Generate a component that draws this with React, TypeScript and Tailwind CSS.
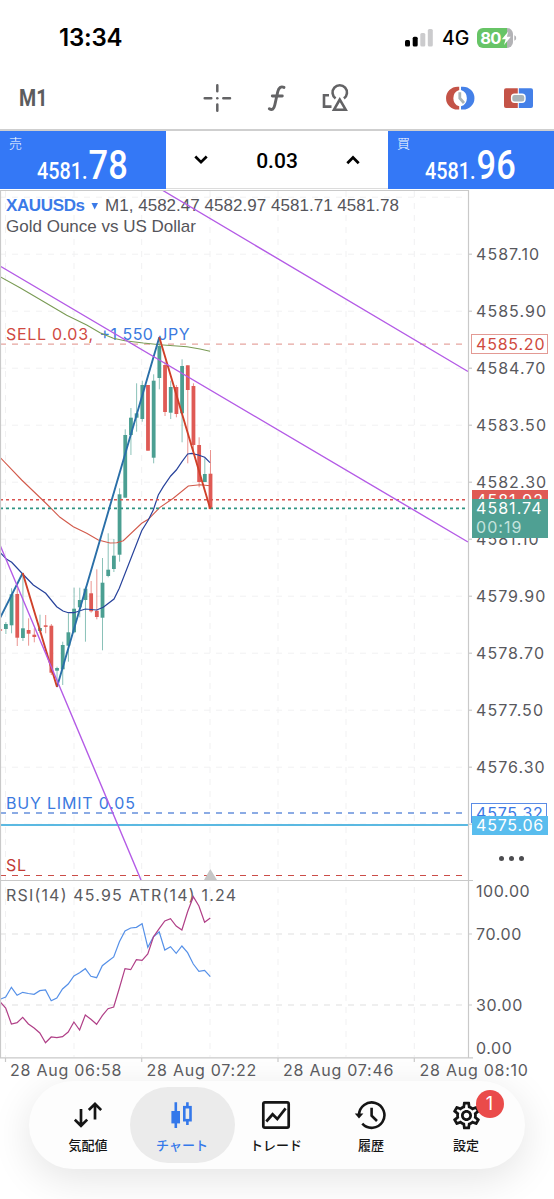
import type { ReactNode } from 'react';
import clsx from 'clsx';
import { MdOutlineSettings } from 'react-icons/md';

const STEP = 5.684;
const UP = '#4b9f92';
const DOWN = '#df5a55';

type Candle = { up: boolean; body: [number, number]; wick: [number, number] };

const up = (a: number, b: number, c: number, d: number): Candle => ({ up: true, body: [a, b], wick: [c, d] });
const down = (a: number, b: number, c: number, d: number): Candle => ({ up: false, body: [a, b], wick: [c, d] });

// one entry per bar: body top, body bottom, wick top, wick bottom
const candles: Candle[] = [
  down(629.3, 630.7, 629, 631),
  up(624, 629, 622, 634),
  up(594.3, 625.3, 588.3, 633.3),
  down(594, 637.7, 588.3, 646),
  up(628.3, 638, 573.3, 641),
  down(630, 633.7, 618.3, 645.7),
  down(634.7, 637, 628.3, 642.3),
  up(628, 631, 614.7, 633.3),
  down(625.3, 626.9, 615, 633.3),
  down(625.7, 672.7, 624, 675),
  up(668, 670.7, 666.7, 686.7),
  up(645, 669.3, 641.7, 685),
  up(632.3, 645.7, 613.3, 661.7),
  up(608.7, 632.3, 587.7, 633.3),
  up(600, 607.3, 587.7, 617.3),
  up(588.7, 600, 586.7, 641.7),
  down(593.3, 611.3, 581, 612.7),
  down(610.7, 617, 569.3, 619.3),
  up(582.7, 617.7, 558, 650.3),
  up(569.7, 576, 533.3, 577.3),
  up(555.7, 569, 539, 572),
  up(494.3, 554.7, 488.3, 561.7),
  up(435, 497.7, 429.3, 497.7),
  up(417.7, 435, 408, 455),
  up(413.3, 417.7, 383.3, 431.7),
  up(385, 419, 380.7, 421.7),
  down(385, 450.7, 385, 450.7),
  up(380.7, 457.7, 374.3, 463.3),
  up(346, 378, 340, 389.3),
  down(365, 412, 361.7, 416),
  up(387, 412.7, 380.7, 419),
  down(387, 414, 385, 417.3),
  up(366, 413.3, 359.3, 442.3),
  down(365.3, 390, 365.3, 463.3),
  down(386, 445, 383.3, 453.3),
  down(445, 482, 437.3, 487.3),
  up(474, 482, 458.3, 482),
  down(473.7, 509, 450, 509),
];

const rsi = [
  999.3, 997, 987.3, 995.3, 992.3, 993.5, 994.3, 990.7, 990, 1000.7, 998, 989, 984, 976, 972.7, 968.7, 976.3, 977.7,
  965.7, 961.3, 957, 941.7, 931, 928, 927.3, 923.7, 947.3, 936.7, 931.7, 950, 946.7, 953.3, 946, 952.7, 964, 971.3,
  970.3, 976.7,
];

const atr = [
  1001.7, 1008, 1024, 1022.7, 1017.3, 1024, 1028, 1033, 1042.7, 1037, 1037.7, 1036.7, 1032, 1022, 1030, 1015, 1019.3,
  1024.3, 1015.7, 1008.7, 1007, 988, 968.7, 969.7, 959.7, 960.3, 954, 936.7, 928.7, 921, 918.7, 926, 930, 911.7, 896.7,
  906, 922.3, 918,
];

const slowMa =
  '0,276.7 20,287.7 43,301.3 66.7,315.3 86.7,325 100,332.7 113.3,338.3 125,340.7 143.3,343 160,344.7 187,346.7 200,349 210,351.3';
const midMa =
  '0,457.3 21.7,480 46.7,504 60,517.3 73.3,526.7 86.7,533.3 98.3,540 110,543 116.7,542.7 123.3,540.7 141.7,523.3 148.3,519.3 160,507.3 173.3,498.3 188.3,486 200,484.7 210.3,485.7';
const fastMa =
  '0,552.3 6.7,559.3 11.7,562.3 22.7,574 33.3,585 45.7,593.3 56.7,606.7 63,611 68.3,612.7 74,612.7 85.3,609 96.7,610 103.3,607.3 114,599 119.3,588.3 141.7,530.7 148.3,520 153.3,510 158.3,495 163.3,486.7 170.7,476 176.3,470 182,461.7 187.7,454 191.7,453.3 198.3,455 204.7,457.3 210,462.7';

const priceLabels = [
  '4587.10', '4585.90', '4584.70', '4583.50', '4582.30', '4581.10', '4579.90', '4578.70', '4577.50', '4576.30',
];
const timeLabels = ['28 Aug 06:58', '28 Aug 07:22', '28 Aug 07:46', '28 Aug 08:10'];

const gridX = [5.5, 74, 141.7, 210, 278, 346, 414.3];
const gridY = [197, 254, 311, 368, 425, 482, 539, 596, 653, 710, 767, 824];

const toPoints = (values: number[]) => values.map((y, i) => `${(i * STEP).toFixed(1)},${y}`).join(' ');

function StatusBar() {
  return (
    <div className="flex h-[75px] items-center justify-between pl-[59px] pr-[37px]">
      <span className="text-[24px] font-semibold leading-none tracking-[-0.2px] text-black">13:34</span>
      <div className="flex items-center">
        <svg width="28" height="18" viewBox="0 0 28 18">
          <rect x="0" y="11" width="5" height="6.5" rx="1.5" fill="#000" />
          <rect x="7.7" y="7.8" width="5" height="9.7" rx="1.5" fill="#000" />
          <rect x="15.3" y="4" width="5" height="13.5" rx="1.5" fill="#cbcbcd" />
          <rect x="22.8" y="0" width="5" height="17.5" rx="1.5" fill="#cbcbcd" />
        </svg>
        <span className="ml-[9px] w-[35px] pt-[2px] text-[19.5px] font-medium leading-none">4G</span>
        <svg width="40" height="20" viewBox="0 0 40 20">
          <path d="M6 0H30V20H6A6 6 0 0 1 0 14V6A6 6 0 0 1 6 0Z" fill="#67c466" />
          <path d="M30 0A6 6 0 0 1 36 6V14A6 6 0 0 1 30 20Z" fill="#b3b3b6" />
          <path d="M37.3 7.2A3 3 0 0 1 37.3 12.8Z" fill="#b3b3b6" />
          <text x="3.3" y="16" textLength="21" className="fill-white text-[16.5px] font-bold">80</text>
          <path d="M31.3 3.5L24.8 11.2H28.6L27 17L33.8 8.8H29.9Z" fill="#fff" />
        </svg>
      </div>
    </div>
  );
}

function Toolbar() {
  return (
    <div className="flex h-[56px] items-start border-b-2 border-[#cfcfcf] pl-[19px]">
      <span className="mt-[10px] w-[183px] origin-left scale-x-[0.8] font-[Roboto] text-[24.5px] font-bold leading-[25px] text-[#5c5c5e]">
        M1
      </span>
      <svg className="mt-[8px]" width="30" height="30" viewBox="202 83 30 30" fill="none" stroke="#636365" strokeWidth="2.5" strokeLinecap="round">
        <path d="M217.3 85.3V91.3M217.3 104.5V110.7M204.7 98.2H211.3M223.3 98.2H230" />
        <circle cx="217.3" cy="98.2" r="1.3" fill="#636365" stroke="none" />
      </svg>
      <svg className="ml-[34px] mt-[8px]" width="22" height="30" viewBox="266 83 22 30" fill="none" stroke="#636365" strokeWidth="2.9" strokeLinecap="round">
        <path d="M269.3 108.8C272.2 110.6 274 108.8 274.8 105L277.8 91.5C278.7 87.6 281 86 284 87.4M272.3 96H282.3" />
      </svg>
      <svg className="ml-[32px] mt-[8px]" width="30" height="30" viewBox="320 83 30 30" fill="none" stroke="#636365" strokeWidth="2.6">
        <path d="M329 95.3H324V106.6H331.5" />
        <path d="M335.6 98.4A7.2 7.2 0 1 1 343.9 98.4" />
        <path d="M339.8 99.5L334 109.7H345.7Z" />
      </svg>
      <svg className="ml-[94px] mt-[8px]" width="32" height="30" viewBox="444 83 32 30">
        <path d="M459.2 86.7H457.5A11.45 11.45 0 0 0 457.5 109.6H459.2V106.3A8.6 8.6 0 0 1 459.2 90Z" fill="#c45347" />
        <path d="M461 86.7H463A11.45 11.45 0 0 1 463 109.6H461V106.3A8.6 8.6 0 0 0 461 90Z" fill="#4480e8" />
        <path d="M459.8 92.3V98.3L464 103" fill="none" stroke="#a9b4b9" strokeWidth="2.8" />
      </svg>
      <svg className="ml-[26px] mt-[8px]" width="32" height="30" viewBox="502 83 32 30">
        <path d="M517.8 88.3H506A2 2 0 0 0 504 90.3V106A2 2 0 0 0 506 108H517.8Z" fill="#c45347" />
        <path d="M518.8 88.3H531A2 2 0 0 1 533 90.3V106A2 2 0 0 1 531 108H518.8Z" fill="#4480e8" />
        <rect x="511.6" y="94.2" width="13.4" height="8" rx="3" fill="#a9b4b9" stroke="#fff" strokeWidth="1.4" />
      </svg>
    </div>
  );
}

function QuoteButton({ label, whole, pips }: { label: string; whole: string; pips: string }) {
  return (
    <button className="relative h-[58px] w-[166px] bg-[#3478f6] text-white">
      <span className="absolute left-[9px] top-[4px] font-['Noto_Sans_CJK_JP'] text-[13px] font-light leading-[16px]">
        {label}
      </span>
      <span className="flex origin-left scale-x-[0.86] items-baseline whitespace-nowrap pl-[42px] pt-[14px] font-[Roboto] leading-[42px]">
        <span className="w-[61px] shrink-0 text-[23px] font-medium">{whole}</span>
        <span className="text-[40px] font-medium">{pips}</span>
      </span>
    </button>
  );
}

function QuoteBar() {
  return (
    <div className="flex h-[59px] justify-between">
      <QuoteButton label="売" whole="4581." pips="78" />
      <div className="flex h-[58px] flex-1 items-center justify-between border-b border-[#dcdcdc] px-[28px]">
        <svg width="14" height="10" viewBox="0 0 14 10" fill="none" stroke="#000" strokeWidth="2.7">
          <path d="M1.3 1.5L7 7.2L12.7 1.5" />
        </svg>
        <span className="pt-[4px] font-[Roboto] text-[21px] font-medium leading-none">0.03</span>
        <svg width="14" height="10" viewBox="0 0 14 10" fill="none" stroke="#000" strokeWidth="2.7">
          <path d="M1.3 8.2L7 2.5L12.7 8.2" />
        </svg>
      </div>
      <QuoteButton label="買" whole="4581." pips="96" />
    </div>
  );
}

function Plot() {
  return (
    <svg className="block shrink-0" width="473" height="873" viewBox="0 190 473 873" fill="none">
      <g stroke="#f1f1f2" strokeWidth="1" strokeDasharray="6 6">
        {gridX.map((x) => <path key={x} d={`M${x} 191V1057`} />)}
        {gridY.map((y) => <path key={y} d={`M0 ${y + 0.2}H468`} />)}
        <path d="M0 934H468M0 1005H468" stroke="#dfdfdf" strokeWidth="1.2" />
      </g>

      <g className="font-['Liberation_Sans'] text-[17px]">
        <text x="6" y="210.5" textLength="79" className="fill-[#3b7ae8] font-bold">XAUUSDs</text>
        <path d="M91.5 203H98L94.7 209.5Z" fill="#3b7ae8" />
        <text x="105" y="210.5" textLength="294" fill="#55555b">M1, 4582.47 4582.97 4581.71 4581.78</text>
        <text x="6" y="231.5" textLength="190" fill="#55555b">Gold Ounce vs US Dollar</text>
      </g>
      <g className="text-[16px]">
        <text x="6" y="339.7" textLength="87" fill="#d04a42">SELL 0.03,</text>
        <text x="99.5" y="339.7" textLength="90" fill="#3b7ae0">+1 550 JPY</text>
        <text x="6" y="808.7" textLength="129" fill="#3b7ae0">BUY LIMIT 0.05</text>
        <text x="6" y="871.3" textLength="20" fill="#c23b35">SL</text>
        <text x="6" y="900.5" textLength="230" fill="#5b5b60">RSI(14) 45.95 ATR(14) 1.24</text>
      </g>

      <path d="M0 344.2H468" stroke="#e6a5a0" strokeWidth="1.3" strokeDasharray="6 6" />
      <path d="M0 813H468" stroke="#6590dc" strokeWidth="1.5" strokeDasharray="6 6" />
      <path d="M0 825H468" stroke="#5bb9e2" strokeWidth="1.8" />
      <path d="M0 875.5H468" stroke="#cb4d48" strokeWidth="1.2" strokeDasharray="6 6" />
      <path d="M210.3 869L217 880H204Z" fill="#c6c6c6" />

      {candles.map((c, i) => {
        const x = i * STEP + 0.2;
        const color = c.up ? UP : DOWN;
        return (
          <g key={i}>
            <path d={`M${x} ${c.wick[0]}V${c.wick[1]}`} stroke={color} strokeWidth="1" opacity="0.65" />
            <rect x={x - 1.9} y={c.body[0]} width="3.8" height={c.body[1] - c.body[0]} fill={color} />
          </g>
        );
      })}

      <polyline points={slowMa} stroke="#7a9b55" strokeWidth="1.1" />
      <polyline points={midMa} stroke="#d25a4b" strokeWidth="1.1" />
      <polyline points={fastMa} stroke="#27429b" strokeWidth="1.2" />
      <path d="M0 499.7H468" stroke="#d9534f" strokeWidth="1.6" strokeDasharray="3 3" />
      <path d="M0 508.4H468" stroke="#2f9482" strokeWidth="1.6" strokeDasharray="3 3" />
      <path d="M0 618L22.7 573M57 687L159.3 337.3" stroke="#2a6fa8" strokeWidth="1.9" />
      <path d="M22.7 573L57 687M159.3 337.3L210.3 509" stroke="#cf4029" strokeWidth="1.9" />
      <path d="M162 190L468 371.5M0 266L468 542M0 545L141 880" stroke="#b45be6" strokeWidth="1.4" />

      <polyline points={toPoints(rsi)} stroke="#5590e8" strokeWidth="1.2" />
      <polyline points={toPoints(atr)} stroke="#b03f87" strokeWidth="1.2" />

      <g stroke="#c9c9c9" strokeWidth="1.2">
        <path d="M0.5 190V1058" />
        <path d="M0 190.4H469M468.5 190V1058M0 880.5H473M0 1057.8H473" />
        {gridY.slice(1).map((y) => <path key={y} d={`M468 ${y + 0.2}H472`} />)}
        <path d="M468 934H472M468 1005H472M5.5 1058V1062M141.7 1058V1062M278 1058V1062M414.3 1058V1062" />
      </g>
    </svg>
  );
}

function PriceAxis() {
  return (
    <div className="relative h-[868px] flex-1 pl-[3px] pt-[35.5px] text-[16px] tracking-[1.05px] text-[#58585d]">
      {priceLabels.map((p) => (
        <div key={p} className="h-[57px] leading-[57px]">{p}</div>
      ))}

      {/* level tags */}
      <div className="absolute left-[-2px] top-[144px] h-[20px] w-[77px] border border-[#e39a94] bg-white pl-[4px] leading-[19px] tracking-[0.8px] text-[#cf4a40]">
        4585.20
      </div>
      <div className="absolute left-[-1px] top-[300px] h-[20px] w-[76px] bg-[#e05a54] pl-[4px] leading-[20px] text-white">
        4581.92
      </div>
      <div className="absolute left-[-1px] top-[309px] h-[39px] w-[76px] bg-[#4fa093] pl-[4px] leading-[19px] text-white">
        <div>4581.74</div>
        <div className="text-[#c4e3dd]">00:19</div>
      </div>
      <div className="absolute left-[-2px] top-[613px] h-[20px] w-[76px] border border-[#5b8ce6] bg-white pl-[4px] leading-[19px] tracking-[0.8px] text-[#3b78e4]">
        4575.32
      </div>
      <div className="absolute left-[-1px] top-[626px] h-[19px] w-[76px] bg-[#59bdee] pl-[4px] leading-[19px] tracking-[0.8px] text-white">
        4575.06
      </div>

      <div className="mt-[60px] flex gap-[5px] pl-[23px]">
        <span className="h-[5px] w-[5px] rounded-full bg-[#4d4d50]" />
        <span className="h-[5px] w-[5px] rounded-full bg-[#4d4d50]" />
        <span className="h-[5px] w-[5px] rounded-full bg-[#4d4d50]" />
      </div>
      <div className="mt-[20px] leading-[20px] tracking-[0.6px]">100.00</div>
      <div className="mt-[23px] leading-[20px] tracking-[0.6px]">70.00</div>
      <div className="mt-[51px] leading-[20px] tracking-[0.6px]">30.00</div>
      <div className="mt-[23px] leading-[20px] tracking-[0.6px]">0.00</div>
    </div>
  );
}

function Tab({ label, active, badge, children }: { label: string; active?: boolean; badge?: number; children: ReactNode }) {
  return (
    <button
      className={clsx(
        'relative flex h-[76px] w-[105px] shrink-0 flex-col items-center rounded-[38px] pt-[13px]',
        active ? 'bg-[#ebebeb] text-[#3478ea]' : 'text-[#151515]',
      )}
    >
      <span className="flex h-[30px] items-center justify-center">{children}</span>
      <span className="mt-[5px] whitespace-nowrap font-['Noto_Sans_CJK_JP'] text-[13px] font-medium leading-[20px]">{label}</span>
      {badge && (
        <span className="absolute left-[62px] top-[3px] flex h-[28px] w-[28px] items-center justify-center rounded-full bg-[#ea4b4a] text-[18px] leading-none text-white">
          {badge}
        </span>
      )}
    </button>
  );
}

function TabBar() {
  return (
    <nav className="mx-[29px] flex h-[88px] items-center justify-center rounded-[44px] bg-[#fdfdfd] shadow-[0_10px_40px_rgba(0,0,0,0.11)]">
      <div className="-mr-[11px]">
        <Tab label="気配値">
          <svg width="28" height="28" viewBox="0 0 28 28" fill="none" stroke="currentColor" strokeWidth="2.7">
            <path d="M7 8V25M0.8 18.6L7 24.8L13.2 18.6M21 18.5V3M14.8 9L21 2.8L27.2 9" />
          </svg>
        </Tab>
      </div>
      <Tab label="チャート" active>
        <svg width="28" height="28" viewBox="169 1101 28 28" fill="none" stroke="currentColor" strokeWidth="2.6">
          <path d="M176.8 1102.3V1128M188.4 1102.3V1107M188.4 1121V1125" />
          <rect x="172.4" y="1111" width="8.6" height="12.4" fill="currentColor" stroke="none" />
          <rect x="185.3" y="1107.2" width="6.2" height="13" />
        </svg>
      </Tab>
      <div className="-ml-[11px] -mr-[10px]">
        <Tab label="トレード">
          <svg width="30" height="30" viewBox="262 1100 30 30" fill="none" stroke="currentColor" strokeWidth="2.7">
            <rect x="264.3" y="1102.3" width="25.4" height="25.4" rx="1.6" />
            <path d="M267.3 1121.5L273.6 1114.3L278.3 1119L286.6 1108.3" />
          </svg>
        </Tab>
      </div>
      <Tab label="履歴">
        <svg width="34" height="30" viewBox="354 1100 34 30" fill="none" stroke="currentColor" strokeWidth="2.6">
          <path d="M359 1115A12.7 12.7 0 1 1 362.3 1123.7" />
          <path d="M354.8 1113.4H363.4L359 1118.4Z" fill="currentColor" stroke="none" />
          <path d="M371.6 1107.8V1115.6L377 1121" />
        </svg>
      </Tab>
      <div className="-ml-[10px]">
        <Tab label="設定" badge={1}>
          <MdOutlineSettings size={33} />
        </Tab>
      </div>
    </nav>
  );
}

export default function App() {
  return (
    <div className="h-[1199px] w-[554px] overflow-hidden bg-white font-[Inter] text-black">
      <StatusBar />
      <Toolbar />
      <QuoteBar />
      <div className="flex h-[868px]">
        <Plot />
        <PriceAxis />
      </div>
      <div className="flex h-[23px] pl-[10px] text-[16px] leading-[24px] tracking-[0.75px] text-[#5b5b60]">
        {timeLabels.map((t) => (
          <span key={t} className="w-[136.5px] shrink-0 whitespace-nowrap">{t}</span>
        ))}
      </div>
      <TabBar />
    </div>
  );
}
